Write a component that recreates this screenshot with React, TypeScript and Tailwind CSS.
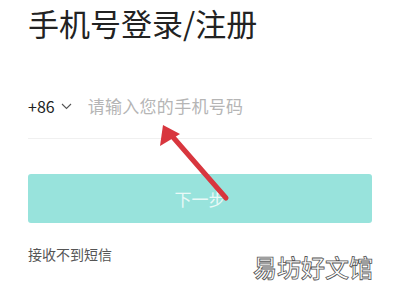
import React from 'react';

const Arrow: React.FC = () => (
  <svg
    className="absolute left-0 top-0 pointer-events-none"
    width="400"
    height="300"
    viewBox="0 0 400 300"
  >
    {/* shaft */}
    <line x1="226" y1="198" x2="172" y2="136" stroke="#d8363e" strokeWidth="5" strokeLinecap="round" />
    {/* head */}
    <polygon points="163,125 160,146 180,134" fill="#d8363e" />
  </svg>
);

export default function App() {
  return (
    <div
      className="relative w-[400px] h-[300px] overflow-hidden bg-white"
      style={{ fontFamily: '"Noto Sans CJK SC", "Noto Sans", sans-serif' }}
    >
      <div className="flex flex-col px-[28px]">
        {/* Title */}
        <h1 className="pt-[4px] text-[31px] leading-[38px] text-[#222] font-normal">手机号登录/注册</h1>

        {/* Phone input */}
        <div className="mt-[49px] flex items-center h-[30px]">
          <span className="text-[16px] text-[#222]">+86</span>
          <svg className="ml-[6px]" width="11" height="7" viewBox="0 0 11 7">
            <path d="M1 1 L5.5 5.5 L10 1" fill="none" stroke="#555" strokeWidth="1.1" />
          </svg>
          <span className="ml-[16px] text-[17px] text-[#b5b5b5] tracking-[0.3px]">请输入您的手机号码</span>
        </div>
        <div className="mt-[17px] h-px bg-[#f0f0f0]" />

        {/* Next button */}
        <button className="mt-[35px] h-[49px] w-full rounded-[3px] bg-[#98e3dc] text-[17px] text-[#e9f9f7]">
          下一步
        </button>

        {/* Help link */}
        <div className="mt-[21px] text-[14px] leading-[20px] text-[#555]">接收不到短信</div>
      </div>

      {/* Watermark */}
      <div className="absolute left-[253px] top-[252px] text-[24px] leading-[30px] font-medium text-white [-webkit-text-stroke:0.8px_#555]">
        易坊好文馆
      </div>

      <Arrow />
    </div>
  );
}
